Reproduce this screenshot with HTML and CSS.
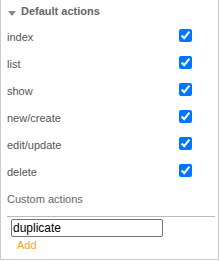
FILE: index.html
```html
<!DOCTYPE html>
<html lang="en">
<head>
    <meta charset="UTF-8">
    <title>Actions</title>
    <link rel="stylesheet" href="styles.css">
</head>
<body>
    <div class="panel">
        <div class="legend"><span class="caret"></span>Default actions</div>
        <label class="row"><span>index</span><input type="checkbox" checked></label>
        <label class="row"><span>list</span><input type="checkbox" checked></label>
        <label class="row"><span>show</span><input type="checkbox" checked></label>
        <label class="row"><span>new/create</span><input type="checkbox" checked></label>
        <label class="row"><span>edit/update</span><input type="checkbox" checked></label>
        <label class="row"><span>delete</span><input type="checkbox" checked></label>
        <div class="row custom"><span>Custom actions</span></div>
        <hr class="sep">
        <input class="action-input" type="text" value="duplicate">
        <a class="add" href="#">Add</a>
    </div>
</body>
</html>
```

FILE: styles.css
```css
body {
    margin: 0;
    font-family: "Liberation Sans", Arial, sans-serif;
    font-size: 11px;
    background: #fff;
}
.panel {
    width: 208px;
    padding: 0 3px 7px 6px;
    border: 1px solid #ccc;
    border-top: none;
    display: flex;
    flex-direction: column;
    align-items: flex-start;
}
.legend {
    height: 22px;
    display: flex;
    align-items: center;
    padding-left: 1px;
    font-weight: bold;
    color: #666;
}
.caret {
    width: 0;
    height: 0;
    border-left: 4px solid transparent;
    border-right: 4px solid transparent;
    border-top: 5px solid #888;
    margin: 4px 5px 0 0;
}
.row {
    display: grid;
    grid-template-columns: 172px 13px;
    height: 27px;
    align-items: center;
    color: #555;
}
.row span {
    padding-top: 2px;
}
.row input {
    margin: 0;
    width: 13px;
    height: 13px;
}
.custom {
    color: #666;
}
.sep {
    align-self: stretch;
    margin: 5px 0 2px 0;
    border: none;
    border-top: 1px solid #bbb;
}
.action-input {
    box-sizing: border-box;
    width: 152px;
    height: 18px;
    margin: 0 0 0 4px;
    padding: 0 1px;
    font-family: "Liberation Sans", Arial, sans-serif;
    font-size: 12px;
    color: #000;
    border: 1px solid #767676;
    border-radius: 2px;
}
.add {
    margin: 2px 0 0 10px;
    color: #f5a623;
    text-decoration: none;
    line-height: 13px;
}
```
